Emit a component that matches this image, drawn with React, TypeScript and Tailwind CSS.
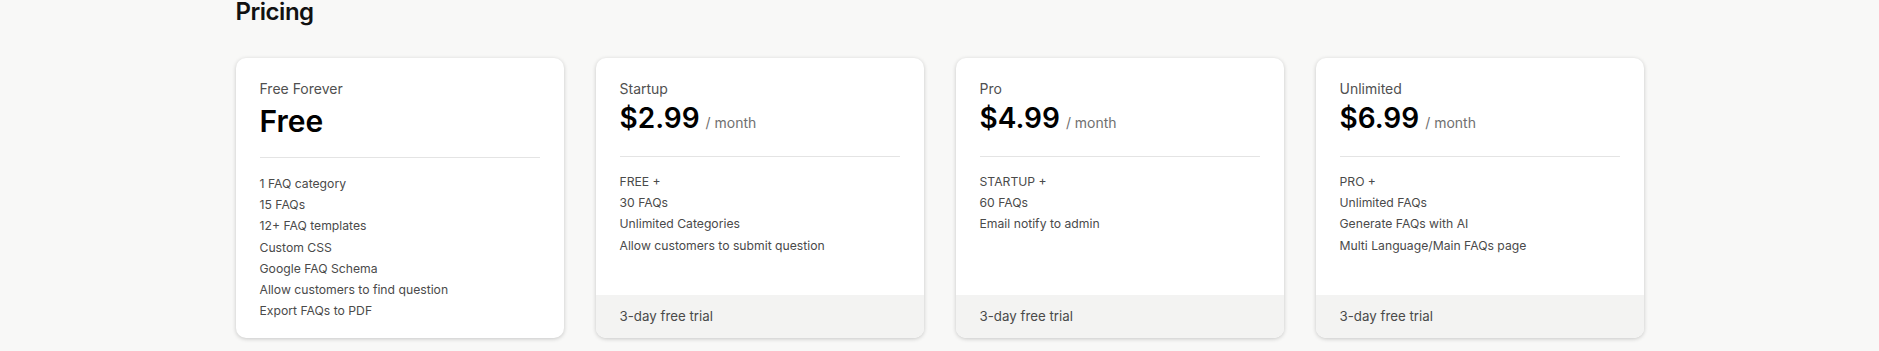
import React from 'react';

type Plan = {
  name: string;
  price: string;
  perMonth: boolean;
  features: string[];
  trial: boolean;
};

const PLANS: Plan[] = [
  {
    name: 'Free Forever',
    price: 'Free',
    perMonth: false,
    features: [
      '1 FAQ category',
      '15 FAQs',
      '12+ FAQ templates',
      'Custom CSS',
      'Google FAQ Schema',
      'Allow customers to find question',
      'Export FAQs to PDF',
    ],
    trial: false,
  },
  {
    name: 'Startup',
    price: '$2.99',
    perMonth: true,
    features: ['FREE +', '30 FAQs', 'Unlimited Categories', 'Allow customers to submit question'],
    trial: true,
  },
  {
    name: 'Pro',
    price: '$4.99',
    perMonth: true,
    features: ['STARTUP +', '60 FAQs', 'Email notify to admin'],
    trial: true,
  },
  {
    name: 'Unlimited',
    price: '$6.99',
    perMonth: true,
    features: ['PRO +', 'Unlimited FAQs', 'Generate FAQs with AI', 'Multi Language/Main FAQs page'],
    trial: true,
  },
];

function PlanCard({ plan }: { plan: Plan }) {
  // the free card has a slightly bigger price line than the paid ones
  const free = !plan.perMonth;
  return (
    <div className="flex flex-col overflow-hidden rounded-[10px] bg-white shadow-[0_1px_4px_rgba(0,0,0,0.2)]">
      <div className="flex-1 px-6 pt-[21px] pb-[17px]">
        <div className="text-[14px] leading-5 text-[#505050]">{plan.name}</div>
        <div className={free ? 'mt-[4px] flex items-baseline' : 'mt-[1px] flex items-baseline gap-[6px]'}>
          <span
            className={
              free
                ? 'text-[30px] font-semibold leading-9 text-black'
                : 'text-[28px] font-semibold leading-9 text-black'
            }
          >
            {plan.price}
          </span>
          {plan.perMonth && <span className="text-[14px] text-[#707070]">/ month</span>}
        </div>
        <div className={free ? 'mt-[18px] h-px bg-[#e4e4e4]' : 'mt-[20px] h-px bg-[#e4e4e4]'} />
        <ul className={free ? 'mt-[15px]' : 'mt-[14px]'}>
          {plan.features.map((f) => (
            <li key={f} className="text-[12.2px] leading-[21.2px] text-[#4a4a4a]">
              {f}
            </li>
          ))}
        </ul>
      </div>
      {plan.trial && (
        <div className="flex h-[43px] items-center bg-[#f3f3f2] px-6 text-[13.3px] text-[#4a4a4a]">
          3-day free trial
        </div>
      )}
    </div>
  );
}

export default function App() {
  return (
    <div className="min-h-screen bg-[#f8f8f7] font-['Inter',sans-serif]">
      <div className="mx-auto w-[1408px]">
        <h2 className="text-[24px] font-semibold leading-6 tracking-[-0.02em] text-[#111]">Pricing</h2>
        <div className="mt-[34px] grid grid-cols-4 gap-8">
          {PLANS.map((p) => (
            <PlanCard key={p.name} plan={p} />
          ))}
        </div>
      </div>
    </div>
  );
}
